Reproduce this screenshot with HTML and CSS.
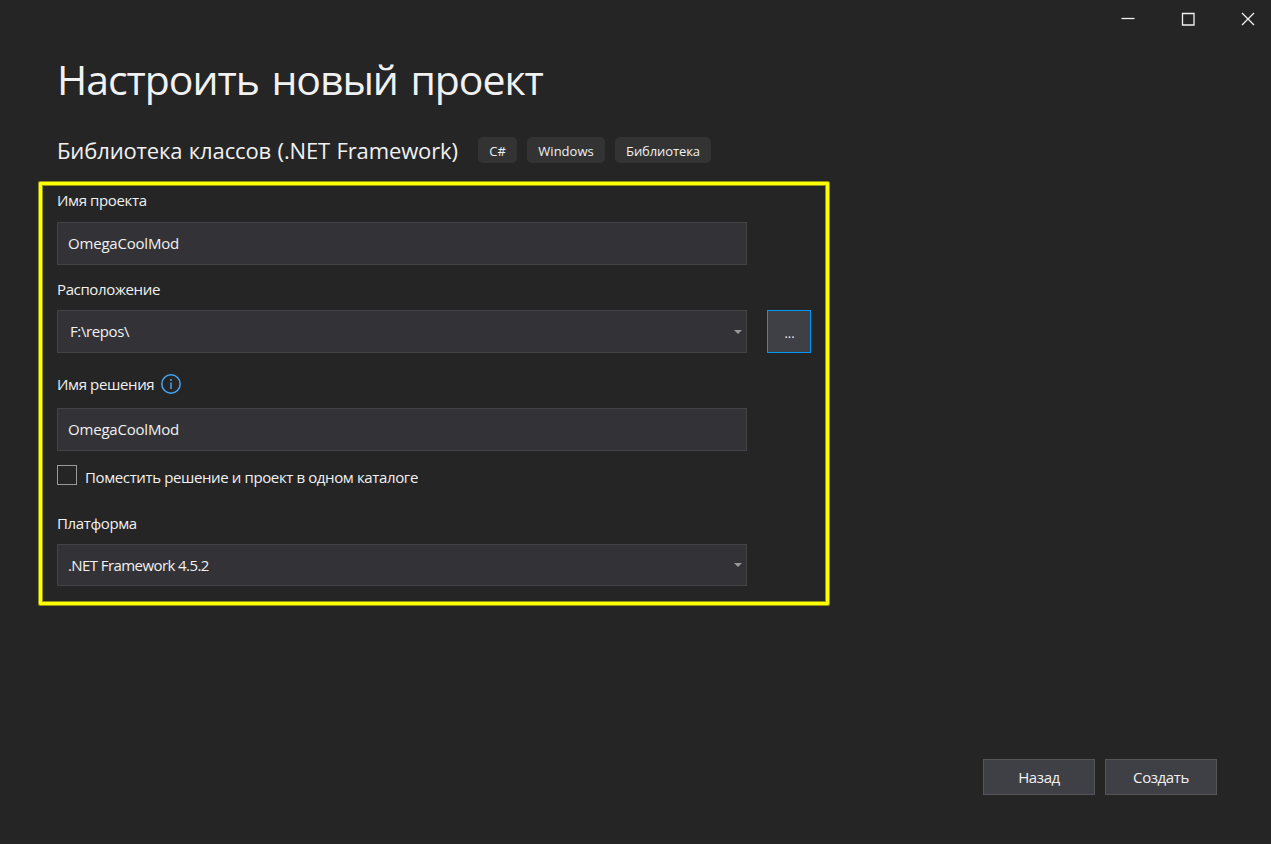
FILE: index.html
```
<!DOCTYPE html>
<html lang="ru">
<head>
<meta charset="utf-8">
<title>Настроить новый проект</title>
<link rel="stylesheet" href="styles.css">
</head>
<body>
<main class="window">
  <header class="titlebar">
    <svg class="caption" viewBox="0 0 60 36"><path d="M21.500 18.500H34.500"/></svg>
    <svg class="caption" viewBox="0 0 60 36"><path d="M22.500 13.500h11.500v11.500h-11.500z"/></svg>
    <svg class="caption" viewBox="0 0 60 36"><path d="M22 13l12 12M34 13l-12 12"/></svg>
  </header>
  <h1 class="title">Настроить новый проект</h1>
  <div class="template">
    <h2 class="template-name">Библиотека классов (.NET Framework)</h2>
    <ul class="tags">
      <li class="tag tag-lang">C#</li>
      <li class="tag tag-os">Windows</li>
      <li class="tag tag-type">Библиотека</li>
    </ul>
  </div>
  <form class="form">
    <label class="label label-project">Имя проекта</label>
    <div class="field field-name">OmegaCoolMod</div>
    <label class="label label-location">Расположение</label>
    <div class="row">
      <div class="field field-path"><span>F:\repos\</span><svg class="arrow" viewBox="0 0 8 4"><path d="M0 0h8l-4 4z"/></svg></div>
      <button type="button" class="browse">...</button>
    </div>
    <label class="label label-solution"><span>Имя решения</span>
      <svg class="info" viewBox="0 0 20 20"><circle cx="10" cy="10" r="9.200"/><path d="M10 5v2M10 8.500v6.500"/></svg>
    </label>
    <div class="field field-name">OmegaCoolMod</div>
    <div class="check"><span class="box"></span><span class="check-text">Поместить решение и проект в одном каталоге</span></div>
    <label class="label label-platform">Платформа</label>
    <div class="field field-platform"><span>.NET Framework 4.5.2</span><svg class="arrow" viewBox="0 0 8 4"><path d="M0 0h8l-4 4z"/></svg></div>
  </form>
  <footer class="actions">
    <button type="button" class="button">Назад</button>
    <button type="button" class="button">Создать</button>
  </footer>
</main>
</body>
</html>
```
FILE: styles.css
```
* { box-sizing: border-box; }
body { margin: 0; background: #252526; }
.window {
  display: flex;
  flex-direction: column;
  width: 1271px;
  height: 844px;
  overflow: hidden;
  color: #f1f1f1;
  font: 15px/20px "Open Sans", "Noto Sans", sans-serif;
  white-space: nowrap;
}
.titlebar { display: flex; justify-content: flex-end; height: 36px; margin-right: -9px; }
.caption { width: 60px; height: 36px; fill: none; stroke: #f1f1f1; stroke-width: 1.3; }
.title { margin: 13px 0 0 57px; height: 61px; font-size: 41px; line-height: 60px; font-weight: 400; letter-spacing: -1.05px; word-spacing: 3px; }
.template { display: flex; align-items: center; height: 26px; margin: 27px 0 0 57px; }
.template-name { width: 421px; margin: 0; font-size: 22px; line-height: 26px; font-weight: 400; letter-spacing: -.12px; word-spacing: .8px; }
.tags { display: flex; gap: 10px; margin: 0; padding: 0; list-style: none; }
.tag { height: 26px; border-radius: 5px; background: #333334; font-size: 13px; line-height: 28px; text-align: center; }
.tag-lang { width: 39px; }
.tag-os { width: 78px; }
.tag-type { width: 96px; letter-spacing: -.1px; }
.form {
  width: 790px;
  height: 423px;
  margin: 19px 0 0 39px;
  padding: 0 12px 0 15px;
  border: 3px solid #ff0;
  border-radius: 1px;
  box-shadow: 0 0 0 1px #929213, inset 0 0 0 1px #929213;
}
.label { display: flex; align-items: center; height: 20px; letter-spacing: -.37px; }
.label-project { margin: 5px 0 12px; }
.label-location { margin: 14px 0 11px; }
.label-solution { margin: 21px 0 14px; gap: 7px; }
.label-platform { margin: 27px 0 11px; }
.field {
  display: flex;
  align-items: center;
  justify-content: space-between;
  width: 690px;
  height: 43px;
  padding: 0 4px 0 10px;
  border: 1px solid #434346;
  background: #333337;
}
.field-name { padding-bottom: 2px; letter-spacing: -.2px; }
.field-path { padding-left: 12px; letter-spacing: -.4px; }
.field-path span { padding-bottom: 2px; }
.field-platform { height: 42px; letter-spacing: -.58px; }
.arrow { width: 8px; height: 4px; fill: #999; }
.row { display: flex; gap: 20px; }
.browse { width: 44px; height: 43px; padding: 2px 0 0 1px; border: 1px solid #0097fb; background: #3f3f46; color: #f1f1f1; font: 13px/20px "Open Sans", sans-serif; }
.info { width: 20px; height: 20px; fill: none; stroke: #45a5f5; stroke-width: 1.5; }
.check { display: flex; gap: 8px; margin-top: 14px; height: 21px; }
.box { width: 20px; height: 20px; border: 1px solid #999; }
.check-text { line-height: 25px; letter-spacing: -.38px; }
.actions { display: flex; gap: 10px; margin: 154px 0 0 983px; }
.button { width: 112px; height: 36px; padding: 0; border: 1px solid #555558; background: #3f3f46; color: #f1f1f1; font: 15px/20px "Open Sans", sans-serif; letter-spacing: -.4px; }
```
